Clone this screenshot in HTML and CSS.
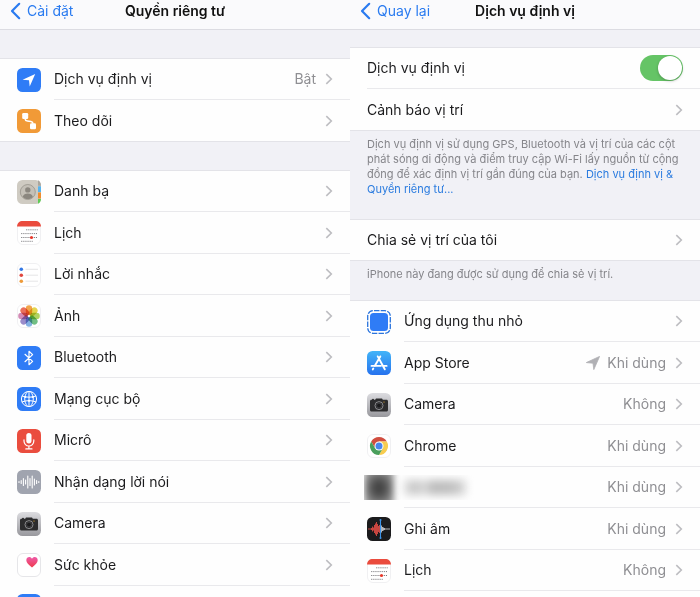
FILE: index.html
```html
<!DOCTYPE html>
<html lang="vi">
<head>
    <meta charset="UTF-8">
    <meta name="viewport" content="width=device-width, initial-scale=1.0">
    <title>Quyền riêng tư</title>
    <link rel="stylesheet" href="styles.css">
</head>
<body>
    <!-- Shared icons -->
    <svg class="sprite" aria-hidden="true">
        <defs>
            <linearGradient id="silver" x1="0" y1="0" x2="0" y2="1">
                <stop offset="0" stop-color="#dcdce0"/>
                <stop offset="1" stop-color="#98989d"/>
            </linearGradient>
            <linearGradient id="store-blue" x1="0" y1="0" x2="0" y2="1">
                <stop offset="0" stop-color="#42b4f8"/>
                <stop offset="1" stop-color="#2672ee"/>
            </linearGradient>
            <linearGradient id="heart-pink" x1="0" y1="0" x2="0" y2="1">
                <stop offset="0" stop-color="#ee5aa8"/>
                <stop offset="1" stop-color="#ee3b4c"/>
            </linearGradient>
        </defs>
        <symbol id="chevron" viewBox="0 0 8 12">
            <path d="M1.300 1.200 6.300 6 1.300 10.800" fill="none" stroke="#bdbdc1" stroke-width="1.600"/>
        </symbol>
        <symbol id="back" viewBox="0 0 11 18">
            <path d="M9.200 1.800 2 9l7.200 7.200" fill="none" stroke="#2a7bf0" stroke-width="2.200" stroke-linecap="round" stroke-linejoin="round"/>
        </symbol>
        <symbol id="arrow" viewBox="0 0 14 14">
            <path d="M13.600.4 7.800 13.600 7 7.200.3 6.600z" fill="currentColor" stroke="currentColor" stroke-width=".8" stroke-linejoin="round"/>
        </symbol>
        <symbol id="calendar" viewBox="0 0 24 24">
            <rect x=".5" y=".5" width="23" height="23" rx="5.500" fill="#fff" stroke="#f0f0f2"/>
            <path d="M0 5.600C.2 2 2.300 0 6 0h12c3.700 0 5.800 2 6 5.600z" fill="#ea4b3d"/>
            <g stroke="#77777b" stroke-width="1" stroke-dasharray="1.100 1">
                <path d="M9.200 8.800h11.500M4.200 12.600h16.500M4.200 16.500h16.500M4.200 20.300h11.500"/>
            </g>
            <circle cx="14.500" cy="16.500" r="1.600" fill="#e8392b"/>
        </symbol>
        <symbol id="camera" viewBox="0 0 24 24">
            <rect width="24" height="24" rx="5.500" fill="url(#silver)"/>
            <path d="M8.200 6.800 9 5.400h6l.8 1.400h3.700c.9 0 1.500.6 1.500 1.500v8.600c0 .9-.6 1.500-1.500 1.500h-15c-.9 0-1.500-.6-1.500-1.500V8.300c0-.9.6-1.500 1.500-1.500z" fill="#2c2c2e"/>
            <rect x="5" y="5.900" width="2" height="1" fill="#2c2c2e"/>
            <circle cx="12" cy="12.600" r="4" fill="#222224" stroke="#a5a5a8" stroke-width=".8"/>
            <circle cx="12" cy="12.600" r="2.400" fill="#19191b" stroke="#55555a" stroke-width=".6"/>
            <circle cx="17" cy="9" r=".6" fill="#f0b030"/>
        </symbol>
    </svg>

    <main class="screens">
        <section class="screen">
            <header class="navbar">
                <a class="back" href="#"><svg width="11" height="18"><use href="#back"/></svg>Cài đặt</a>
                <h1>Quyền riêng tư</h1>
            </header>

            <ul class="group">
                <li><a class="row" href="#">
                    <svg class="icon" viewBox="0 0 24 24"><rect width="24" height="24" rx="5.500" fill="#2f7cf6"/><path d="M18.200 5.900 12.700 18.400 12 12.300 5.600 11.800z" fill="#fff"/></svg>
                    <span class="cell"><span class="label">Dịch vụ định vị</span><span class="value">Bật</span><svg class="chevron"><use href="#chevron"/></svg></span>
                </a></li>
                <li><a class="row" href="#">
                    <svg class="icon" viewBox="0 0 24 24"><rect width="24" height="24" rx="5.500" fill="#f19a37"/><g fill="#fff"><rect x="5.200" y="4" width="6" height="6" rx="1.300"/><rect x="13" y="14.300" width="6" height="6" rx="1.300"/></g><path d="M8.200 9v1.300c0 1.100.8 1.500 2.200 1.700l3.500.6c1.400.3 2.100.9 2.100 2.200" fill="none" stroke="#fff" stroke-width="1.500"/></svg>
                    <span class="cell"><span class="label">Theo dõi</span><svg class="chevron"><use href="#chevron"/></svg></span>
                </a></li>
            </ul>

            <ul class="group">
                <li><a class="row" href="#">
                    <svg class="icon" viewBox="0 0 24 24"><rect width="24" height="24" rx="5.500" fill="#cfcbc2"/><path d="M21 6.300h3v5.700h-3z" fill="#55b4ee"/><path d="M21 12.500h3v6h-3z" fill="#f08c2e"/><path d="M21 19h3c-.2 2.500-1.200 4-3 4.700z" fill="#5fcb55"/><path d="M21 .3c1.800.8 2.900 2.500 3 5.500h-3z" fill="#aaa69e"/><circle cx="10.800" cy="12" r="7.500" fill="#c4c0b7" stroke="#98948b" stroke-width=".8"/><circle cx="10.800" cy="9.900" r="2.700" fill="#8b877f"/><path d="M5.700 16.800c.8-2.400 2.700-3.400 5.100-3.400s4.300 1 5.100 3.400c-1.300 1.500-3 2.300-5.100 2.300s-3.800-.8-5.100-2.300z" fill="#8b877f"/></svg>
                    <span class="cell"><span class="label">Danh bạ</span><svg class="chevron"><use href="#chevron"/></svg></span>
                </a></li>
                <li><a class="row" href="#">
                    <svg class="icon"><use href="#calendar"/></svg>
                    <span class="cell"><span class="label">Lịch</span><svg class="chevron"><use href="#chevron"/></svg></span>
                </a></li>
                <li><a class="row" href="#">
                    <svg class="icon" viewBox="0 0 24 24"><rect x=".5" y=".5" width="23" height="23" rx="5.500" fill="#fff" stroke="#f0f0f2"/><path d="M8.500 6.300H21M8.500 12.200H21M8.500 18.200H21" stroke="#dedee0" stroke-width=".8"/><circle cx="4.300" cy="6.300" r="1.800" fill="#3478e5"/><circle cx="4.300" cy="12.200" r="1.800" fill="#e0473f"/><circle cx="4.300" cy="18.200" r="1.800" fill="#ee9b3a"/></svg>
                    <span class="cell"><span class="label">Lời nhắc</span><svg class="chevron"><use href="#chevron"/></svg></span>
                </a></li>
                <li><a class="row" href="#">
                    <svg class="icon" viewBox="0 0 24 24"><rect x=".5" y=".5" width="23" height="23" rx="5.500" fill="#fff" stroke="#f0f0f2"/>
                        <g class="petals">
                            <rect x="8.800" y="1.200" width="6.400" height="9.800" rx="3.200" fill="#f19b38"/>
                            <rect x="8.800" y="1.200" width="6.400" height="9.800" rx="3.200" fill="#e3d13c" transform="rotate(45 12 12)"/>
                            <rect x="8.800" y="1.200" width="6.400" height="9.800" rx="3.200" fill="#a8cf50" transform="rotate(90 12 12)"/>
                            <rect x="8.800" y="1.200" width="6.400" height="9.800" rx="3.200" fill="#62b876" transform="rotate(135 12 12)"/>
                            <rect x="8.800" y="1.200" width="6.400" height="9.800" rx="3.200" fill="#76a9e0" transform="rotate(180 12 12)"/>
                            <rect x="8.800" y="1.200" width="6.400" height="9.800" rx="3.200" fill="#8f7fc4" transform="rotate(225 12 12)"/>
                            <rect x="8.800" y="1.200" width="6.400" height="9.800" rx="3.200" fill="#ce7fae" transform="rotate(270 12 12)"/>
                            <rect x="8.800" y="1.200" width="6.400" height="9.800" rx="3.200" fill="#e8604a" transform="rotate(315 12 12)"/>
                        </g>
                    </svg>
                    <span class="cell"><span class="label">Ảnh</span><svg class="chevron"><use href="#chevron"/></svg></span>
                </a></li>
                <li><a class="row" href="#">
                    <svg class="icon" viewBox="0 0 24 24"><rect width="24" height="24" rx="5.500" fill="#2f7cf6"/><path d="M8 8.300 15.600 15.400 12 18.700V5.300L15.600 8.600 8 15.700" fill="none" stroke="#fff" stroke-width="1.200" stroke-linejoin="round" stroke-linecap="round"/></svg>
                    <span class="cell"><span class="label">Bluetooth</span><svg class="chevron"><use href="#chevron"/></svg></span>
                </a></li>
                <li><a class="row" href="#">
                    <svg class="icon" viewBox="0 0 24 24"><rect width="24" height="24" rx="5.500" fill="#2f7cf6"/><g fill="none" stroke="#fff" stroke-width="1"><circle cx="12" cy="12" r="7.600"/><path d="M5 9c4.500 1.600 9.500 1.600 14 0M4.800 15c4.700-1.800 9.700-1.800 14.400 0M10.500 4.600c-3.700 4.700-3.700 10 0 14.800M13.500 4.600c3.700 4.700 3.700 10 0 14.800M12 4.500v15"/></g><g fill="#fff"><circle cx="8.300" cy="10" r="1.100"/><circle cx="15.800" cy="10" r="1.100"/><circle cx="12" cy="13.800" r="1.100"/></g></svg>
                    <span class="cell"><span class="label">Mạng cục bộ</span><svg class="chevron"><use href="#chevron"/></svg></span>
                </a></li>
                <li><a class="row" href="#">
                    <svg class="icon" viewBox="0 0 24 24"><rect width="24" height="24" rx="5.500" fill="#ea4d3e"/><rect x="9.300" y="4" width="5.200" height="10.400" rx="2.600" fill="#fff"/><path d="M7 10.800v1.300a4.900 4.900 0 0 0 9.800 0v-1.300M11.900 17v2.800M8.800 19.900h6.200" fill="none" stroke="#fff" stroke-width="1.200" stroke-linecap="round"/></svg>
                    <span class="cell"><span class="label">Micrô</span><svg class="chevron"><use href="#chevron"/></svg></span>
                </a></li>
                <li><a class="row" href="#">
                    <svg class="icon" viewBox="0 0 24 24"><rect width="24" height="24" rx="5.500" fill="#a0a4af"/><path d="M2 11.500v1M4.200 10.500v3M6.400 8.500v7M8.600 10v4M10.800 6v12M13 8.500v7M15.200 6v12M17.400 9v6M19.600 10.500v3M21.800 11.500v1" stroke="#fff" stroke-width="1.100" stroke-linecap="round"/></svg>
                    <span class="cell"><span class="label">Nhận dạng lời nói</span><svg class="chevron"><use href="#chevron"/></svg></span>
                </a></li>
                <li><a class="row" href="#">
                    <svg class="icon"><use href="#camera"/></svg>
                    <span class="cell"><span class="label">Camera</span><svg class="chevron"><use href="#chevron"/></svg></span>
                </a></li>
                <li><a class="row" href="#">
                    <svg class="icon" viewBox="0 0 24 24"><rect x=".5" y=".5" width="23" height="23" rx="5.500" fill="#fff" stroke="#e6e6e9"/><path d="M15 14.400C11.600 12 9.300 9.800 9.300 7.300c0-3.500 4.100-4.400 5.700-1.600 1.600-2.800 5.700-1.900 5.700 1.600 0 2.500-2.300 4.700-5.700 7.100z" fill="url(#heart-pink)"/></svg>
                    <span class="cell"><span class="label">Sức khỏe</span><svg class="chevron"><use href="#chevron"/></svg></span>
                </a></li>
                <li><a class="row" href="#">
                    <svg class="icon" viewBox="0 0 24 24"><rect width="24" height="24" rx="5.500" fill="#2f7cf6"/></svg>
                    <span class="cell"></span>
                </a></li>
            </ul>
        </section>

        <section class="screen">
            <header class="navbar">
                <a class="back" href="#"><svg width="11" height="18"><use href="#back"/></svg>Quay lại</a>
                <h1>Dịch vụ định vị</h1>
            </header>

            <ul class="group first">
                <li><div class="row">
                    <span class="cell"><label class="label" for="location">Dịch vụ định vị</label><input class="switch" type="checkbox" id="location" checked></span>
                </div></li>
                <li><a class="row" href="#">
                    <span class="cell"><span class="label">Cảnh báo vị trí</span><svg class="chevron"><use href="#chevron"/></svg></span>
                </a></li>
            </ul>
            <p class="note">Dịch vụ định vị sử dụng GPS, Bluetooth và vị trí của các cột phát sóng di động và điểm truy cập Wi-Fi lấy nguồn từ cộng đồng để xác định vị trí gần đúng của bạn. <a href="#">Dịch vụ định vị &amp; Quyền riêng tư...</a></p>

            <ul class="group">
                <li><a class="row" href="#">
                    <span class="cell"><span class="label">Chia sẻ vị trí của tôi</span><svg class="chevron"><use href="#chevron"/></svg></span>
                </a></li>
            </ul>
            <p class="note short">iPhone này đang được sử dụng để chia sẻ vị trí.</p>

            <ul class="group">
                <li><a class="row" href="#">
                    <svg class="icon" viewBox="0 0 24 24"><rect x="3" y="3" width="18" height="18" rx="3.500" fill="#2f7cf6"/><rect x=".7" y=".7" width="22.600" height="22.600" rx="5.500" fill="none" stroke="#2a74dd" stroke-width="1.300" pathLength="96" stroke-dasharray="6.500 1.500" stroke-dashoffset="-1"/></svg>
                    <span class="cell"><span class="label">Ứng dụng thu nhỏ</span><svg class="chevron"><use href="#chevron"/></svg></span>
                </a></li>
                <li><a class="row" href="#">
                    <svg class="icon" viewBox="0 0 24 24"><rect width="24" height="24" rx="5.500" fill="url(#store-blue)"/><path d="M13.300 5.400 7.700 15M6.300 17.500l-.5.900M10.700 5.400 17.800 18.300M4.500 14.900h9.300M16.800 14.900h2.800" stroke="#fff" stroke-width="1.900" stroke-linecap="round"/></svg>
                    <span class="cell"><span class="label">App Store</span><svg class="arrow"><use href="#arrow"/></svg><span class="value">Khi dùng</span><svg class="chevron"><use href="#chevron"/></svg></span>
                </a></li>
                <li><a class="row" href="#">
                    <svg class="icon"><use href="#camera"/></svg>
                    <span class="cell"><span class="label">Camera</span><span class="value">Không</span><svg class="chevron"><use href="#chevron"/></svg></span>
                </a></li>
                <li><a class="row" href="#">
                    <svg class="icon" viewBox="0 0 24 24"><rect x=".5" y=".5" width="23" height="23" rx="5.500" fill="#fff" stroke="#f0f0f2"/><path d="M12 7.500h7.800A9 9 0 0 0 4.200 7.500L8.100 14.300z" fill="#d14e40"/><path d="M15.900 14.300 12 21A9 9 0 0 0 19.800 7.500H12z" fill="#f7cc4f"/><path d="M8.100 14.300 4.200 7.500A9 9 0 0 0 12 21l3.900-6.700z" fill="#4a9f5c"/><circle cx="12" cy="12" r="4.500" fill="#fff"/><circle cx="12" cy="12" r="3.500" fill="#4a86ec"/></svg>
                    <span class="cell"><span class="label">Chrome</span><span class="value">Khi dùng</span><svg class="chevron"><use href="#chevron"/></svg></span>
                </a></li>
                <!-- Hidden app -->
                <li><a class="row" href="#">
                    <span class="icon"></span>
                    <span class="cell"><span class="label"></span><span class="value">Khi dùng</span><svg class="chevron"><use href="#chevron"/></svg></span>
                    <span class="masked" aria-hidden="true"><i class="blob"></i><i class="smudge"></i></span>
                </a></li>
                <li><a class="row" href="#">
                    <svg class="icon" viewBox="0 0 24 24"><rect width="24" height="24" rx="5.500" fill="#1b1b1d"/><path d="M1 12h3M4.500 11v2M5.500 9.500v5M6.500 10.500v3M7.500 8v8M8.500 6.500v11M9.500 5v14M10.500 7v10M11.500 9v6M12.500 8v8" stroke="#c94640" stroke-width="1"/><path d="M14.500 8.500v7M15.500 10v4M16.500 10.500v3M17.500 11v2M18.500 11.500v1M19 12h4" stroke="#c8c8cc" stroke-width=".9"/><path d="M13.500 2.800v18.400" stroke="#3d95ea" stroke-width="1.100"/><circle cx="13.500" cy="3" r="1" fill="#3d95ea"/><circle cx="13.500" cy="21" r="1" fill="#3d95ea"/></svg>
                    <span class="cell"><span class="label">Ghi âm</span><span class="value">Khi dùng</span><svg class="chevron"><use href="#chevron"/></svg></span>
                </a></li>
                <li><a class="row" href="#">
                    <svg class="icon"><use href="#calendar"/></svg>
                    <span class="cell"><span class="label">Lịch</span><span class="value">Không</span><svg class="chevron"><use href="#chevron"/></svg></span>
                </a></li>
                <li><a class="row" href="#">
                    <span class="icon"></span>
                    <span class="cell"></span>
                </a></li>
            </ul>
        </section>
    </main>
</body>
</html>
```
FILE: styles.css
```css
* {
    margin: 0;
    padding: 0;
    box-sizing: border-box;
}
body {
    font-family: Inter, "Liberation Sans", sans-serif;
    font-size: 14px;
    line-height: 20px;
    color: #1c1c1e;
    background: #f1f1f6;
}
a {
    color: inherit;
    text-decoration: none;
}
ul {
    list-style: none;
}
svg {
    display: block;
    flex: none;
}
.sprite {
    position: absolute;
    width: 0;
    height: 0;
}
.screens {
    display: grid;
    grid-template-columns: 1fr 1fr;
    height: 100vh;
    overflow: hidden;
}

/* Top bar */
.navbar {
    display: grid;
    grid-template-columns: 1fr auto 1fr;
    align-items: center;
    padding: 1px 10px 8px;
    background: #fafafc;
    border-bottom: 1px solid #dcdce2;
}
.navbar h1 {
    font-size: 14px;
    font-weight: 600;
    color: #111;
}
.back {
    display: flex;
    align-items: center;
    gap: 6px;
    color: #2a7bf0;
}

/* Setting lists */
.group {
    margin-top: 28px;
    background: #fefefe;
    border-top: 1px solid #e3e3e8;
}
.group.first {
    margin-top: 17px;
}
.note + .group {
    margin-top: 0;
}
.row {
    position: relative;
    display: flex;
    align-items: center;
    gap: 13px;
    height: 41px;
    padding-left: 17px;
}
li:nth-child(even) .row {
    height: 42px;
}
.cell {
    flex: 1;
    align-self: stretch;
    display: flex;
    align-items: center;
    padding-right: 17px;
    border-bottom: 1px solid #e9e9ec;
}
li:last-child .row {
    border-bottom: 1px solid #e3e3e8;
}
li:last-child .cell {
    border-bottom: none;
}
.label {
    flex: 1;
}
.value {
    color: #8f8f93;
}
.icon {
    width: 24px;
    height: 24px;
}
.chevron {
    width: 8px;
    height: 12px;
    margin-left: 9px;
}
.arrow {
    width: 14px;
    height: 14px;
    margin-right: 7px;
    color: #b0b0b4;
}
.petals rect {
    mix-blend-mode: multiply;
    opacity: .9;
}
.switch {
    appearance: none;
    width: 43px;
    height: 26px;
    padding: 1px;
    border-radius: 13px;
    background: #d9d9de;
    cursor: pointer;
}
.switch::before {
    content: "";
    display: block;
    width: 24px;
    height: 24px;
    border-radius: 50%;
    background: #fff;
    box-shadow: 0 1px 3px rgba(0, 0, 0, .25);
}
.switch:checked {
    background: #65c466;
}
.switch:checked::before {
    margin-left: auto;
}

/* Text under a list */
.note {
    padding: 6px 16px 22px 17px;
    font-size: 11px;
    line-height: 15px;
    color: #85858a;
}
.note.short {
    padding-bottom: 18px;
}
.note a {
    color: #2a7bdf;
}

/* Blurred app name */
.masked {
    position: absolute;
    left: 14px;
    top: 8px;
    display: flex;
    align-items: center;
    gap: 10px;
    width: 120px;
    height: 25px;
    overflow: hidden;
}
.blob {
    width: 30px;
    height: 36px;
    background: radial-gradient(#444 20%, #777 55%, #bbb);
    filter: blur(3px);
}
.smudge {
    width: 62px;
    height: 15px;
    background: linear-gradient(90deg, #ddd, #c4c4c4 20%, #ddd 32%, #bbb 45%, #c0c0c0 80%, #ddd);
    filter: blur(4px);
}
```
